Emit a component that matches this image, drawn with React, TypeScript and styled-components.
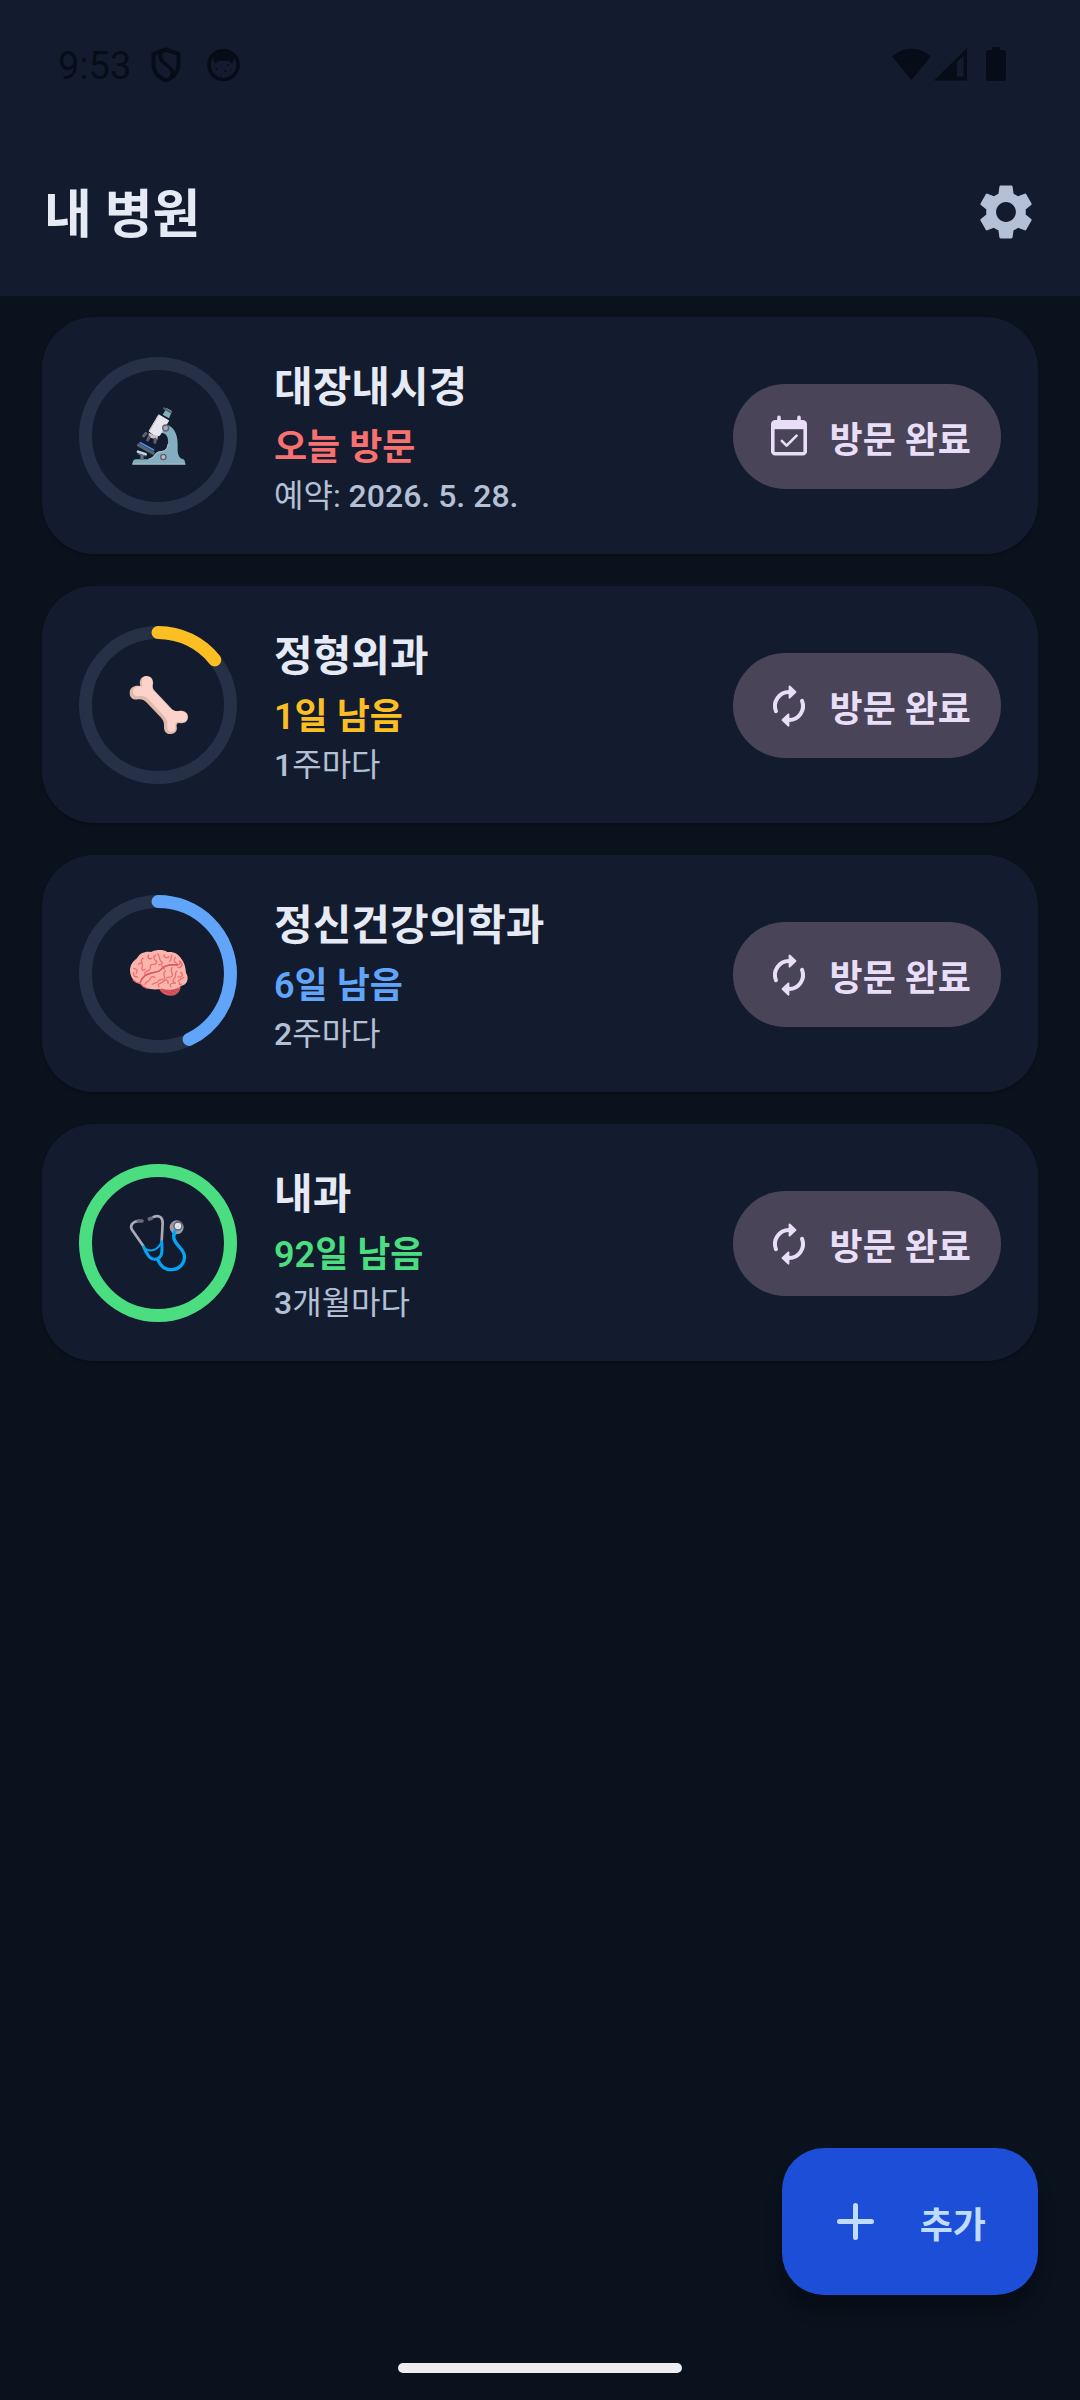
import React from 'react';
import styled, { createGlobalStyle, css, ThemeProvider } from 'styled-components';
import { MdSettings } from 'react-icons/md';

const theme = {
  fontFamily: `Roboto, 'Noto Sans CJK KR', sans-serif`,
  colors: {
    background: '#0a121e',
    surface: '#131c2e',
    track: '#263148',
    text: '#e6eaf5',
    muted: '#b4c0d6',
    tonal: '#4a4458',
    onTonal: '#e8def8',
    primary: '#1d4ed8',
    onPrimary: '#bfdbfe',
    system: '#060d18',
    red: '#f87171',
    amber: '#fbbf24',
    blue: '#60a5fa',
    green: '#4ade80',
  },
};

type Colors = typeof theme.colors;

interface Visit {
  name: string;
  status: string;
  schedule: string;
  color: keyof Colors;
  progress: number;
  once?: boolean;
  picture: React.ReactNode;
}

const visits: Visit[] = [
  {
    name: '대장내시경',
    status: '오늘 방문',
    schedule: '예약: 2026. 5. 28.',
    color: 'red',
    progress: 0,
    once: true,
    picture: <Microscope />,
  },
  {
    name: '정형외과',
    status: '1일 남음',
    schedule: '1주마다',
    color: 'amber',
    progress: 1 / 7,
    picture: <Bone />,
  },
  {
    name: '정신건강의학과',
    status: '6일 남음',
    schedule: '2주마다',
    color: 'blue',
    progress: 6 / 14,
    picture: <Brain />,
  },
  {
    name: '내과',
    status: '92일 남음',
    schedule: '3개월마다',
    color: 'green',
    progress: 1,
    picture: <Stethoscope />,
  },
];

export default function App() {
  return (
    <ThemeProvider theme={theme}>
      <GlobalStyle />
      <Page>
        <Header>
          <StatusBar />
          <AppBar>
            <Title>내 병원</Title>
            <IconButton type="button" aria-label="설정">
              <MdSettings size={66} />
            </IconButton>
          </AppBar>
        </Header>

        <VisitList>
          {visits.map((visit) => (
            <VisitCard key={visit.name} {...visit} />
          ))}
        </VisitList>

        <Footer>
          <AddButton type="button">
            <PlusIcon />
            추가
          </AddButton>
          <HomeIndicator />
        </Footer>
      </Page>
    </ThemeProvider>
  );
}

function StatusBar() {
  return (
    <StyledStatusBar>
      <Clock>9:53</Clock>
      <ShieldIcon />
      <FaceIcon />
      <SystemIcons />
    </StyledStatusBar>
  );
}

function VisitCard({ name, status, schedule, color, progress, once, picture }: Visit) {
  return (
    <Card>
      <Ring>
        <ProgressRing color={theme.colors[color]} progress={progress} />
        <Picture viewBox="0 0 180 180" aria-hidden="true">
          {picture}
        </Picture>
      </Ring>
      <Details>
        <Name>{name}</Name>
        <Status $color={color}>{status}</Status>
        <Schedule>
          {/* numbers are set a step heavier than the words */}
          {schedule.split(/(\d[\d. ]*)/).map((part, i) => (i % 2 ? <Digits key={i}>{part}</Digits> : part))}
        </Schedule>
      </Details>
      <DoneButton type="button">
        {once ? <CalendarIcon /> : <RepeatIcon />}
        방문 완료
      </DoneButton>
    </Card>
  );
}

function ProgressRing({ color, progress }: { color: string; progress: number }) {
  const radius = 72.5;
  const length = 2 * Math.PI * radius;

  return (
    <svg width="158" height="158" viewBox="0 0 158 158" fill="none" strokeWidth="13">
      <circle cx="79" cy="79" r={radius} stroke={theme.colors.track} />
      {progress > 0 && (
        <circle
          cx="79"
          cy="79"
          r={radius}
          stroke={color}
          strokeLinecap="round"
          strokeDasharray={`${length * progress} ${length}`}
          transform="rotate(-90 79 79)"
        />
      )}
    </svg>
  );
}

function ShieldIcon() {
  return (
    <svg width="30" height="36" viewBox="0 0 30 36" fill="none" stroke="currentColor" strokeWidth="4">
      <path d="M15 2.5 2.5 7v10c0 8 5 13.500 12.500 16.500C22.500 30.500 27.500 25 27.500 17V7Z" strokeLinejoin="round" />
      <path d="M13 3c-5 4-5 8-1 12l7 6c3 3 3 5 1 9" strokeWidth="3.500" />
    </svg>
  );
}

function FaceIcon() {
  return (
    <svg width="33" height="34" viewBox="0 0 33 34" fill="currentColor">
      <circle cx="16.500" cy="17" r="14.500" fill="none" stroke="currentColor" strokeWidth="3.600" />
      <path d="M5 8C8 4 11 2 16.500 2S25 4 28 8l-3 8-3-3H11l-3 3Z" />
      <circle cx="9.500" cy="21" r="1" />
      <circle cx="21" cy="17" r="1" />
      <circle cx="18.500" cy="23" r="1" />
      <circle cx="14" cy="27" r=".7" />
      <circle cx="24" cy="22" r=".7" />
    </svg>
  );
}

function SystemIcons() {
  return (
    <svg width="114" height="36" viewBox="0 0 114 36" fill="currentColor">
      <path d="M0 9.500C11 -1 28 -1 39 9.500L19.500 33Z" />
      <path fillRule="evenodd" d="M75 1v32.500H42ZM71.500 9 65 15v14.500h6.500Z" />
      <path d="M100 0h8v3h4q2 0 2 2v27q0 2-2 2H96q-2 0-2-2V5q0-2 2-2h4Z" />
    </svg>
  );
}

function CalendarIcon() {
  return (
    <svg width="48" height="48" viewBox="0 0 24 24" fill="none" stroke="currentColor" strokeLinecap="round">
      <path d="M7 2.200V5M17 2.200V5" strokeWidth="1.800" />
      <rect x="3.900" y="4.400" width="16.200" height="16" rx="1.200" strokeWidth="1.800" />
      <path d="M4 6.300h16" strokeWidth="3.600" strokeLinecap="butt" />
      <path d="m8.400 13.900 2.400 2.400 5-5" strokeWidth="1.300" strokeLinejoin="round" />
    </svg>
  );
}

function RepeatIcon() {
  return (
    <svg width="48" height="48" viewBox="0 0 24 24" fill="none" stroke="currentColor" strokeLinecap="round">
      <path d="M5.500 14.600A7 7 0 0 1 12 5" strokeWidth="2" />
      <path d="M18.500 9.400A7 7 0 0 1 12 19" strokeWidth="2" />
      <path d="M12.300 2.200 15.200 5l-2.900 2.800ZM11.700 16.200 8.800 19l2.900 2.800Z" fill="currentColor" strokeWidth="1" strokeLinejoin="round" />
    </svg>
  );
}

function PlusIcon() {
  return (
    <svg width="63" height="63" viewBox="0 0 63 63" fill="none" stroke="currentColor" strokeWidth="5" strokeLinecap="round">
      <path d="M31.500 15.500v32M15.500 31.500h32" />
    </svg>
  );
}

function Microscope() {
  return (
    <g transform="translate(-54 -48)" strokeLinecap="round">
      <path d="M166 103c32 7 38 40 37 68-1 20 3 33 15 36 5 2 7 6 7 10v6H68v-6c1-5 4-8 10-9h35c20-2 17-22 37-24 14-1 22-7 24-22 2-20-4-32-20-34Z" fill="#82aec0" />
      <path d="M117 207c18-2 16-20 34-22 14-1 21-7 23-22" fill="none" stroke="#b9c6d2" strokeWidth="3" />
      <path d="M68 222h157" stroke="#9fb4c2" strokeWidth="4" />
      <path d="m158 74 12-20 16 9-9 22Z" fill="#82aec0" />
      <path d="m162 55 21 12" stroke="#59616f" strokeWidth="6" />
      <path d="m147 75 29 17-27 44q-12 6-31-12Z" fill="#e6e5f0" stroke="#e6e5f0" strokeWidth="3" strokeLinejoin="round" />
      <path d="m116 128 16 8 12 2-2 11-26-7Z" fill="#cdbfca" />
      <path d="m108 130-7 8M117 141l-4 9M136 148l-1 9" stroke="#5e6070" strokeWidth="9" />
      <circle cx="167" cy="114" r="9" fill="#aaa8b8" stroke="#5e6070" strokeWidth="4" />
      <path d="m86 165 43 24" stroke="#586373" strokeWidth="10" />
      <path d="m91 158 40 22" stroke="#4c8de8" strokeWidth="5" />
      <path d="M96 194v16" stroke="#667080" strokeWidth="10" strokeLinecap="butt" />
      <path d="m84 185 23 8" stroke="#b9d5e3" strokeWidth="8" />
      <path d="m84 192 22 6" stroke="#667080" strokeWidth="3" />
      <circle cx="160" cy="201" r="8" fill="#b8bac7" stroke="#5e6070" strokeWidth="4" />
    </g>
  );
}

function Bone() {
  return (
    <g transform="translate(-294 -315)">
      <path
        d="M331 348c-5-16 2-29 18-30 15 0 22 12 20 24-2 10 0 15 5 20l48 51c6 7 13 11 23 10 16-3 30 5 29 19-1 15-14 20-25 17-7-1-10 2-9 11 3 12-5 22-17 22-14 1-22-8-21-23 1-12-3-20-10-27l-43-45c-7-8-14-10-24-9-16 3-26-5-26-20 0-16 15-23 32-20Z"
        fill="#dfb9a9"
      />
      <path
        d="M337 350c-2-16-2-31 12-31 14 0 20 11 18 22-2 11 0 17 6 23l48 51c6 7 13 10 24 9 14-3 27 5 27 17 0 14-12 18-23 15-11-2-14 3-13 13 2 10-4 16-11 16-10 0-14-8-13-18 1-15-3-22-10-29l-46-50c-8-8-15-11-24-10-13 2-23-2-23-13 0-13 13-16 28-15Z"
        fill="#fbd3cb"
      />
    </g>
  );
}

function Brain() {
  return (
    <g transform="translate(-30 -30)" fill="none" strokeLinecap="round" strokeLinejoin="round">
      <path d="M124 165c5 12 18 21 36 20 17-1 26-12 28-27Z" fill="#d9565b" />
      <path d="m137 170 29 11M149 165l27 11M163 162l20 8" stroke="#a94550" strokeWidth="2" />
      <path d="M38 122c-6-21 3-38 19-49C65 57 82 51 99 54c18-8 38-7 49 0 20-2 33 6 42 20 10 13 13 27 14 43 10 15 4 34-13 38-18 14-40 14-59 9-22 4-47 4-61-13-14-4-27-10-33-29Z" fill="#fcb5ad" />
      <path
        d="M66 145c5-18 18-23 34-28 13-4 23-2 29-11 12-14 31-15 48-13 8 1 11-5 8-12M139 106l-7-11M76 73c-7 2-8 8-4 12M61 91c10-9 15 1 11 9-3 8 4 12 9 6M47 103c10 2 14 7 7 16M58 129c-9 0-13-6-12-13M92 63c-6 8 3 14 9 10M113 63c-11 5-3 15 0 16 7 5 1 14-7 12-8-1-11 5-8 12M81 122c-4-12 10-8 14-16M119 59c8 10 3 17 10 23 8 4 2 11-7 10M139 63c-5 7 8 11 14 5M162 63c-6 11 1 14-7 19M172 70c-10 12 2 16 5 20M188 84c11 12-3 18-9 16M162 100c-7 12 3 15 1 25-2 7-10 2-18 7M142 111c-14 10 4 14-3 23-5 6-14-2-18 7-4 8-12 3-18 10M81 151c4-12 14-7 16-17 1-7 9-8 14-3M123 159c-8-12 9-11 15-18 5-6 15-2 12 8M176 112c-8 8 1 13-6 20-6 5-8 12 2 15M188 115c11 7 1 16-8 14M197 130c-9 9-13 4-17 13M159 158c-8-9 6-11 10-10M185 146c-4 7 5 7 5 4"
        stroke="#ef6f70"
        strokeWidth="4"
      />
      <path d="M66 147c8-21 20-26 34-30 14-3 24-3 29-11 13-14 31-15 49-13" stroke="#d95961" strokeWidth="4" />
      <path d="M46 138c6 6 13 9 20 9 7 10 13 13 22 16" stroke="#ef6f70" strokeWidth="4" />
    </g>
  );
}

function Stethoscope() {
  return (
    <g transform="translate(-54 -69)" fill="none" strokeLinecap="round">
      <path d="M86 93c-19 1-27 15-20 26l34 49M130 81c20-8 29 4 28 20l-3 52" stroke="#aaa9b7" strokeWidth="8" />
      <path d="m85 93 11 0M118 87l6-2" stroke="#696b79" strokeWidth="11" />
      <path d="M101 171c13 28 20 37 33 37 22-1 24-20 21-53" stroke="#05a4f4" strokeWidth="9" />
      <path d="M103 174c14 11 34 12 49-13" stroke="#05a4f4" strokeWidth="6" />
      <path d="M143 209c10 23 25 31 42 30 26-1 41-23 38-43-4-25-33-32-32-58l4-16" stroke="#05a4f4" strokeWidth="10" />
      <circle cx="200" cy="112" r="21" fill="#9c9ba8" />
      <path d="m191 138 4-15" stroke="#05a4f4" strokeWidth="10" />
      <circle cx="204" cy="108" r="12" fill="#e3e1ee" stroke="#5d6070" strokeWidth="4" />
      <circle cx="205" cy="109" r="2" fill="#d8b88c" />
    </g>
  );
}

const GlobalStyle = createGlobalStyle`
  * {
    box-sizing: border-box;
  }

  body {
    margin: 0;
    background: ${theme.colors.background};
    font-family: ${theme.fontFamily};
  }

  button {
    border: 0;
    font-family: inherit;
    cursor: pointer;
  }

  svg {
    display: block;
    flex-shrink: 0;
  }
`;

const Page = styled.div`
  ${({ theme }) => css`
    display: flex;
    flex-direction: column;
    min-height: 100vh;
    background: ${theme.colors.background};
    color: ${theme.colors.text};
  `}
`;

const Header = styled.header`
  background: ${({ theme }) => theme.colors.surface};
`;

const StyledStatusBar = styled.div`
  ${({ theme }) => css`
    display: flex;
    align-items: center;
    height: 128px;
    padding: 2px 74px 0 58px;
    color: ${theme.colors.system};

    svg:last-child {
      margin-left: auto;
    }
  `}
`;

const Clock = styled.span`
  padding-top: 2px;
  font-size: 38px;
  line-height: 44px;
  margin-right: 20px;

  & + svg {
    margin-right: 26px;
  }
`;

const AppBar = styled.div`
  display: flex;
  align-items: center;
  justify-content: space-between;
  height: 168px;
  padding: 0 41px 0 44px;
`;

const Title = styled.h1`
  margin: 0;
  padding-top: 8px;
  font-size: 52px;
  font-weight: 600;
  line-height: 72px;
`;

const IconButton = styled.button`
  padding: 0;
  background: none;
  color: ${({ theme }) => theme.colors.muted};
`;

const VisitList = styled.ul`
  display: flex;
  flex-direction: column;
  gap: 32px;
  margin: 0;
  padding: 21px 42px;
  list-style: none;
`;

const Card = styled.li`
  ${({ theme }) => css`
    display: flex;
    align-items: center;
    gap: 37px;
    padding: 37px;
    border-radius: 52px;
    background: ${theme.colors.surface};
    box-shadow: 0 2px 3px rgba(0, 0, 0, 0.25);
  `}
`;

const Ring = styled.div`
  display: grid;
  place-items: center;

  > * {
    grid-area: 1 / 1;
  }
`;

const Picture = styled.svg`
  width: 60px;
  height: 60px;
`;

const Details = styled.div`
  flex: 1;
  min-width: 0;
`;

const Name = styled.h2`
  margin: 0;
  font-size: 42px;
  font-weight: 600;
  line-height: 68px;
`;

const Status = styled.p<{ $color: keyof Colors }>`
  ${({ theme, $color }) => css`
    margin: 0;
    font-size: 36px;
    font-weight: 600;
    line-height: 53px;
    color: ${theme.colors[$color]};
  `}
`;

const Schedule = styled.p`
  ${({ theme }) => css`
    margin: 0;
    font-size: 32px;
    line-height: 42px;
    color: ${theme.colors.muted};
  `}
`;

const Digits = styled.span`
  font-weight: 500;
`;

const DoneButton = styled.button`
  ${({ theme }) => css`
    display: flex;
    align-items: center;
    gap: 17px;
    height: 105px;
    margin-top: 2px;
    padding: 0 30px 0 32px;
    border-radius: 53px;
    background: ${theme.colors.tonal};
    color: ${theme.colors.onTonal};
    font-size: 36px;
    font-weight: 600;
    white-space: nowrap;
  `}
`;

const Footer = styled.footer`
  display: flex;
  flex-direction: column;
  align-items: center;
  gap: 68px;
  margin-top: auto;
  padding: 0 42px 27px;
`;

const AddButton = styled.button`
  ${({ theme }) => css`
    display: flex;
    align-items: center;
    align-self: flex-end;
    gap: 33px;
    height: 147px;
    padding: 0 52px 0 42px;
    border-radius: 42px;
    background: ${theme.colors.primary};
    color: ${theme.colors.onPrimary};
    box-shadow: 0 16px 16px rgba(0, 0, 0, 0.3);
    font-size: 36px;
    font-weight: 600;
  `}
`;

const HomeIndicator = styled.div`
  width: 284px;
  height: 10px;
  border-radius: 5px;
  background: #eeeef2;
`;
